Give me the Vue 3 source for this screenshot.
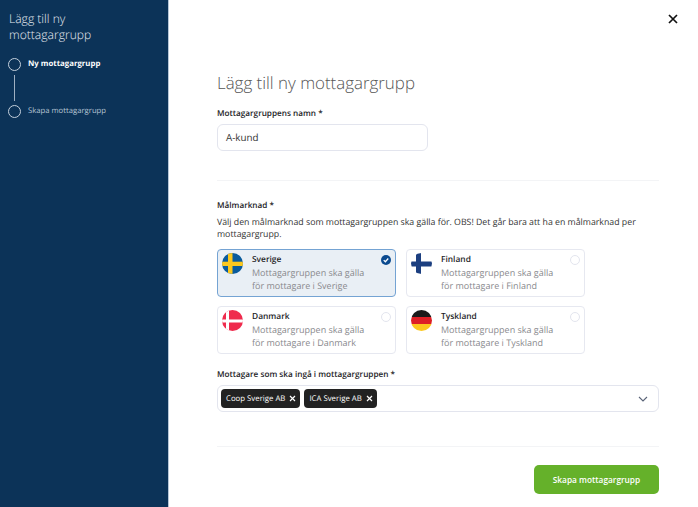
<template>
  <div class="page">
    <aside class="sidebar">
      <h2>Lägg till ny mottagargrupp</h2>
      <ol class="steps">
        <li class="step active"><span class="dot"></span><span>Ny mottagargrupp</span></li>
        <li class="line"></li>
        <li class="step"><span class="dot"></span><span>Skapa mottagargrupp</span></li>
      </ol>
    </aside>

    <main class="main">
      <button class="close" aria-label="Stäng">
        <svg width="10" height="10" viewBox="0 0 10 10"><path d="M1 1l8 8M9 1l-8 8" stroke="#111" stroke-width="1.7" fill="none" /></svg>
      </button>

      <h1>Lägg till ny mottagargrupp</h1>

      <label class="label name-label">Mottagargruppens namn *</label>
      <div class="input">A-kund</div>

      <hr class="divider first" />

      <label class="label">Målmarknad *</label>
      <p class="help">Välj den målmarknad som mottagargruppen ska gälla för. OBS! Det går bara att ha en målmarknad per mottagargrupp.</p>

      <div class="markets">
        <div v-for="m in markets" :key="m.name" class="card" :class="{ selected: m.selected }">
          <svg class="flag" width="21" height="21" viewBox="0 0 21 21">
            <defs>
              <clipPath :id="'clip-' + m.name"><circle cx="10.5" cy="10.5" r="10.5" /></clipPath>
            </defs>
            <g :clip-path="'url(#clip-' + m.name + ')'">
              <template v-if="m.name === 'Sverige'">
                <rect width="21" height="21" fill="#0a5b9c" />
                <rect x="6" width="4.5" height="21" fill="#fcc81e" />
                <rect y="8.7" width="21" height="4.3" fill="#fcc81e" />
              </template>
              <template v-else-if="m.name === 'Finland'">
                <rect width="21" height="21" fill="#fff" />
                <rect x="5" width="5" height="21" fill="#1c3f80" />
                <rect y="8.5" width="21" height="5" fill="#1c3f80" />
              </template>
              <template v-else-if="m.name === 'Danmark'">
                <rect width="21" height="21" fill="#ef2b4d" />
                <rect x="4" width="3" height="21" fill="#fff" />
                <rect y="9.5" width="21" height="3" fill="#fff" />
              </template>
              <template v-else>
                <rect width="21" height="7" fill="#1a1a1a" />
                <rect y="7" width="21" height="7" fill="#dd1f26" />
                <rect y="14" width="21" height="7" fill="#fcc81e" />
              </template>
            </g>
          </svg>
          <div class="card-text">
            <strong>{{ m.name }}</strong>
            <span>Mottagargruppen ska gälla</span>
            <span>för mottagare i {{ m.name }}</span>
          </div>
          <svg v-if="m.selected" class="radio" width="10" height="10" viewBox="0 0 11 11">
            <circle cx="5.5" cy="5.5" r="5.5" fill="#0b4a8f" />
            <path d="M3 5.6l1.8 1.8L8 3.9" stroke="#fff" stroke-width="1.4" fill="none" />
          </svg>
          <span v-else class="radio empty"></span>
        </div>
      </div>

      <label class="label recipients-label">Mottagare som ska ingå i mottagargruppen *</label>
      <div class="select">
        <span v-for="t in tags" :key="t" class="tag">{{ t }}
          <svg width="7" height="7" viewBox="0 0 7 7"><path d="M1 1l5 5M6 1L1 6" stroke="#fff" stroke-width="1.2" fill="none" /></svg>
        </span>
        <svg class="chevron" width="10" height="6" viewBox="0 0 10 6"><path d="M1 1l4 4 4-4" stroke="#5a6478" stroke-width="1.1" fill="none" /></svg>
      </div>

      <hr class="divider last" />

      <div class="actions">
        <button class="submit">Skapa mottagargrupp</button>
      </div>
    </main>
  </div>
</template>

<script setup>
const markets = [
  { name: 'Sverige', selected: true },
  { name: 'Finland', selected: false },
  { name: 'Danmark', selected: false },
  { name: 'Tyskland', selected: false }
]
const tags = ['Coop Sverige AB', 'ICA Sverige AB']
</script>

<style>
html, body { margin: 0; height: 100%; background: #fff; }
</style>

<style scoped>
.page {
  display: flex; width: 698px; height: 507px; overflow: hidden;
  font-family: "Open Sans", "Liberation Sans", sans-serif; color: #1d1d1f;
  text-rendering: geometricPrecision;
}
.sidebar {
  width: 169px; flex: none; background: #0c3358; color: #fff;
  padding: 11px 0 0 8px; box-sizing: border-box;
  border-right: 1px solid #b7c6d6;
}
.sidebar h2 { margin: 0 0 0 1px; font-size: 12.1px; line-height: 16px; font-weight: 300; width: 100px; color: #e6ebf1; }
.steps { list-style: none; margin: 15px 0 0; padding: 0; }
.step { display: flex; align-items: center; gap: 7px; font-size: 7.7px; line-height: 13px; color: #b5c3d2; }
.step.active { color: #fff; font-weight: 700; font-size: 7.8px; }
.dot { width: 11px; height: 11px; border: 1px solid #c4d0dc; border-radius: 50%; flex: none; }
.line { width: 1px; height: 26px; background: #9fb0c2; margin: 4px 0 4px 6px; }

.main { flex: 1; position: relative; padding: 72px 39px 0 48px; min-width: 0; }
.close { position: absolute; top: 14px; right: 20px; padding: 0; border: 0; background: none; display: flex; }
h1 { margin: 0; font-size: 16.9px; line-height: 21px; font-weight: 300; color: #555; }
.label { display: block; font-size: 8.2px; line-height: 13px; font-weight: 600; color: #1d1d1f; }
.name-label { margin-top: 14px; }
.input {
  width: 211px; height: 27px; margin-top: 4px; box-sizing: border-box;
  border: 1px solid #e3e5ee; border-radius: 6px; padding: 0 8px;
  font-size: 9.8px; line-height: 25px; color: #333;
}
.divider { border: 0; border-top: 1px solid #f3f4f6; margin: 0; }
.divider.first { margin: 29px 0 18px; }
.divider.last { margin: 34px 0 18px; }
.help { margin: 4px 0 0; font-size: 8.77px; line-height: 12px; color: #333; }
.markets { display: grid; grid-template-columns: 179px 179px; gap: 9px 10px; margin-top: 9px; }
.card {
  display: flex; height: 48px; box-sizing: border-box; padding: 3px 4px 0 4px; gap: 9px;
  border: 1px solid #e6e8f0; border-radius: 4px; position: relative;
}
.card.selected { background: #e9eff5; border-color: #74a3d3; }
.flag { flex: none; }
.card-text { display: flex; flex-direction: column; font-size: 9px; line-height: 13px; color: #8a8a8e; }
.card-text strong { color: #1d1d1f; font-weight: 600; font-size: 8.4px; }
.radio { position: absolute; top: 5px; right: 4px; }
.radio.empty { width: 8px; height: 8px; border: 1px solid #e3e5ee; border-radius: 50%; }
.recipients-label { margin-top: 14px; }
.select {
  display: flex; align-items: center; gap: 4px; height: 27px; margin-top: 4px; box-sizing: border-box;
  border: 1px solid #e3e5ee; border-radius: 6px; padding: 0 5px 0 3px;
}
.tag {
  display: inline-flex; align-items: center; gap: 4px; height: 19px; padding: 0 4px 0 5px;
  background: #222; color: #fff; border-radius: 4px; font-size: 7.8px; white-space: nowrap;
}
.chevron { margin-left: auto; margin-right: 5px; }
.actions { display: flex; justify-content: flex-end; }
.submit {
  width: 125px; height: 29px; border: 0; border-radius: 5px; background: #65b12a; color: #fff;
  font-family: inherit; font-size: 8.3px; font-weight: 600;
}
</style>
